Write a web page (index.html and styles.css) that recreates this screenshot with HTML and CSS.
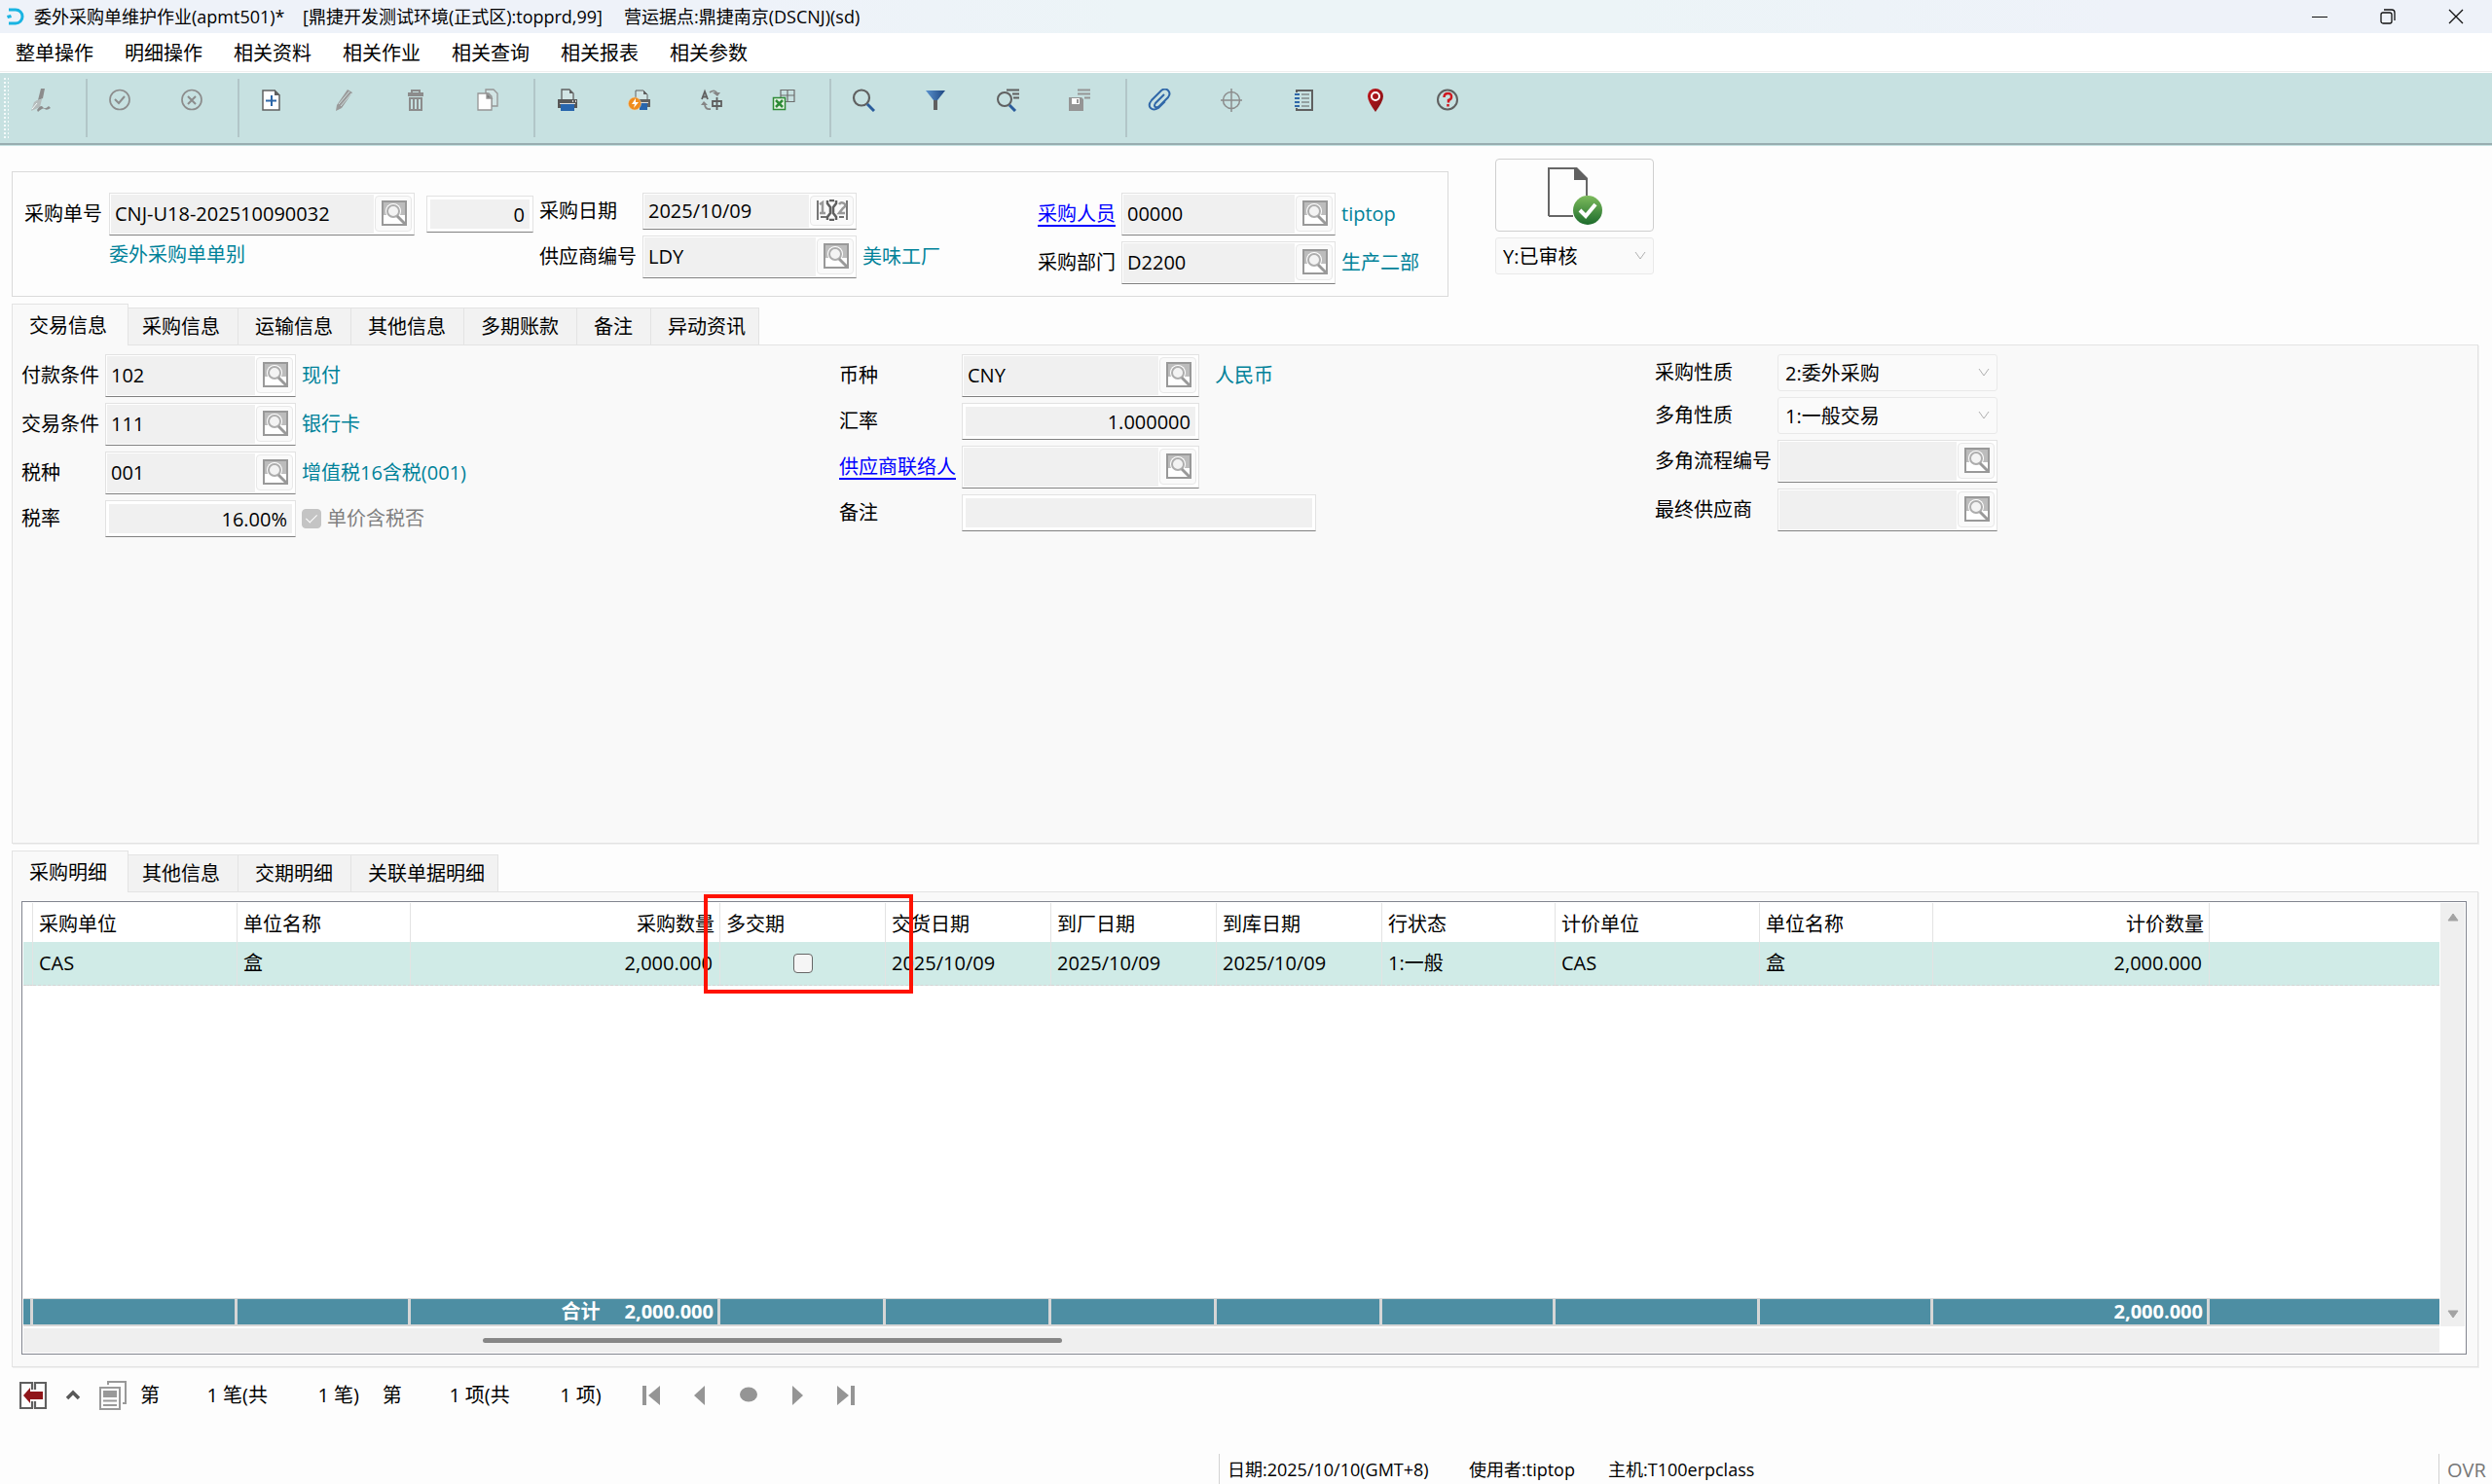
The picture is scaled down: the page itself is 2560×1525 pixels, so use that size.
FILE: index.html
```html
<!DOCTYPE html>
<html lang="zh-CN">
<head>
<meta charset="utf-8">
<title>委外采购单维护作业(apmt501)</title>
<link rel="stylesheet" href="styles.css">
</head>
<body>
<svg width="0" height="0" hidden>
  <defs>
    <linearGradient id="blue" x1="0" y1="0" x2="1" y2="0"><stop offset="0" stop-color="#5b93cf"/><stop offset="1" stop-color="#1d4580"/></linearGradient>
    <linearGradient id="green" x1="0" y1="0" x2="0" y2="1"><stop offset="0" stop-color="#7dbb5c"/><stop offset="1" stop-color="#1c6b2c"/></linearGradient>
    <linearGradient id="red" x1="0" y1="0" x2="1" y2="1"><stop offset="0" stop-color="#c4161c"/><stop offset="1" stop-color="#7a1216"/></linearGradient>
  </defs>
  <symbol id="lookup" viewBox="0 0 26 26">
    <rect x="1" y="1" width="24" height="24" fill="#fff" stroke="#999" stroke-width="2"/>
    <path d="M2 2h22v13H2z" fill="#bcbcbc"/>
    <circle cx="12" cy="11" r="8" fill="#fff"/>
    <circle cx="12" cy="11" r="6" fill="#f3f3f3" stroke="#adadad" stroke-width="2"/>
    <path d="M16 16l8 8" stroke="#999" stroke-width="3"/>
  </symbol>
  <symbol id="chevron" viewBox="0 0 12 10"><path d="M1 1l5 7 5-7" fill="none" stroke="#b0b0b0"/></symbol>
</svg>

<header class="titlebar">
  <svg class="logo" viewBox="0 0 18 18"><path d="M2 2h7a7 7 0 0 1 0 14H2" fill="none" stroke="#19b4e2" stroke-width="3"/><path d="M0 8l4-1 1 3-4 1z" fill="#19b4e2"/></svg>
  <h1 class="title"><span>委外采购单维护作业(apmt501)*</span><span>[鼎捷开发测试环境(正式区):topprd,99]</span><span>营运据点:鼎捷南京(DSCNJ)(sd)</span></h1>
  <div class="window-controls">
    <button type="button" aria-label="最小化"><svg viewBox="0 0 16 16"><path d="M0 8.500h16" stroke="#111"/></svg></button>
    <button type="button" aria-label="还原"><svg viewBox="0 0 16 16" fill="none" stroke="#111" stroke-width="1.300"><rect x="1" y="4" width="11" height="11" rx="2"/><path d="M4 1h8q3 0 3 3v8"/></svg></button>
    <button type="button" aria-label="关闭"><svg viewBox="0 0 16 16"><path d="M1 1l14 14M15 1L1 15" stroke="#111" stroke-width="1.300"/></svg></button>
  </div>
</header>

<nav class="menu">
  <button type="button">整单操作</button><button type="button">明细操作</button><button type="button">相关资料</button><button type="button">相关作业</button><button type="button">相关查询</button><button type="button">相关报表</button><button type="button">相关参数</button>
</nav>

<div class="toolbar" role="toolbar">
  <div class="tools">
    <button type="button" aria-label="签核"><svg viewBox="0 0 24 24" fill="#8c8c8c"><path d="M13 0h4l-2 10-5 2z"/><path d="M9 12l5-1-2 8-9 4 3-9z" fill="#b5bcbc"/><path d="M9 22q4-6 6-3t6-1l2 2q-4 3-6 1t-7 3z"/><path d="M4 21l5-6" stroke="#f4fafa"/></svg></button>
  </div>
  <div class="tools">
    <button type="button" aria-label="确定"><svg viewBox="0 0 24 24" fill="none" stroke="#8c8c8c" stroke-width="1.700"><circle cx="12" cy="11.500" r="10"/><path d="M7 11l4 4 6-7" stroke-width="2"/></svg></button>
    <button type="button" aria-label="取消"><svg viewBox="0 0 24 24" fill="none" stroke="#8c8c8c" stroke-width="1.700"><circle cx="12" cy="11.500" r="10"/><path d="M8 8l8 8M16 8l-8 8" stroke-width="2"/></svg></button>
  </div>
  <div class="tools">
    <button type="button" aria-label="新增"><svg viewBox="0 0 24 24"><path d="M3 2h12l5 5v15H3z" fill="#fff" stroke="#606060" stroke-width="1.500"/><path d="M15 1v6h6z" fill="#606060"/><path d="M12 7v11M6 12.500h11" stroke="#2c66a8" stroke-width="2"/></svg></button>
    <button type="button" aria-label="修改"><svg viewBox="0 0 24 24"><path d="M16 1l5 3-11 16-6 3 1-6z" fill="#9a9a9a"/><path d="M7 16L18 3M9 18L20 5" stroke="#cfe0e0"/></svg></button>
    <button type="button" aria-label="删除"><svg viewBox="0 0 24 24" fill="none" stroke="#8c8c8c"><path d="M8 4V2h8v2" stroke-width="2"/><path d="M4 6h16" stroke-width="4"/><path d="M6 10h12v12H6z" stroke-width="2"/><path d="M10 11v10M14 11v10" stroke-width="2"/></svg></button>
    <button type="button" aria-label="复制"><svg viewBox="0 0 24 24" fill="#fff" stroke="#959595" stroke-width="1.300"><path d="M10 1h8l4 4v13h-6V8l-3-3h-3z" fill="#d2e5e5"/><path d="M2 5h9l5 5v12H2z"/><path d="M11 5v5h5z" fill="#777"/></svg></button>
  </div>
  <div class="tools">
    <button type="button" aria-label="打印"><svg viewBox="0 0 24 24"><path d="M6 11V1h8l4 4v6" fill="#d2e5e5" stroke="#606060" stroke-width="1.300"/><path d="M14 1v4h4z" fill="#606060"/><path d="M2 11h20v9H2z" fill="#575757"/><path d="M17 13h1M20 13h1" stroke="#fff" stroke-width="1.500"/><path d="M5 16h14v7H5z" fill="#2865ad"/><path d="M4 15.500h16" stroke="#ddd"/></svg></button>
    <button type="button" aria-label="快速打印"><svg viewBox="0 0 24 24"><path d="M8 10V2h8l4 4v5" fill="#d2e5e5" stroke="#606060"/><path d="M16 2v4h4z" fill="#606060"/><path d="M8 11h15v8H8z" fill="#606060"/><path d="M12 15h8v7h-8z" fill="#2865ad"/><path d="M12 14.500h9" stroke="#ddd"/><circle cx="7" cy="15.500" r="6.500" fill="#ef8c1e" stroke="#f7d0a0" stroke-width="0.500"/><path d="M8 10l-4 6h3l-1 4 5-6H8z" fill="#fff"/></svg></button>
    <button type="button" aria-label="语言切换"><svg viewBox="0 0 24 24" fill="none" stroke="#606060" stroke-width="1.800"><path d="M2 11L5 3l3 8M3 8.500h4M13 13h9v5h-9zM17.500 9v13"/><path d="M10 4q6-4 8 2" stroke="#858585"/><path d="M13 4h8l-3 4zM1 17l3-4 4 4z" fill="#858585" stroke="none"/><path d="M11 21q-5 1-6-4" stroke="#858585"/></svg></button>
    <button type="button" aria-label="导出表格"><svg viewBox="0 0 24 24" fill="none"><path d="M9 1.500h14v12H9zM16 1v12M9 7h14" stroke="#6d6d6d" stroke-width="1.200"/><rect x="1.500" y="9.500" width="12" height="12" fill="#e9f4e8" stroke="#2e8b37" stroke-width="1.500"/><path d="M4 12l7 7M11 12l-7 7" stroke="#2e8b37" stroke-width="2.500"/></svg></button>
  </div>
  <div class="tools">
    <button type="button" aria-label="查询"><svg viewBox="0 0 24 24" fill="none"><circle cx="10" cy="9.500" r="8" stroke="#606060" stroke-width="2.200"/><path d="M16 16l7 7" stroke="#2a5c9c" stroke-width="3"/></svg></button>
    <button type="button" aria-label="筛选"><svg viewBox="0 0 24 24"><path d="M2 2h20l-8 10h-4z" fill="url(#blue)"/><path d="M10 12h4v10h-4z" fill="#606060"/></svg></button>
    <button type="button" aria-label="查询条件"><svg viewBox="0 0 24 24" fill="none"><circle cx="9" cy="11" r="7" stroke="#606060" stroke-width="2"/><path d="M14 17l6 6" stroke="#2a5c9c" stroke-width="3"/><path d="M11 1.500h13M17 5.500h7M18 9.500h6" stroke="#606060" stroke-width="2"/></svg></button>
    <button type="button" aria-label="保存条件"><svg viewBox="0 0 24 24"><path d="M10 1.500h13M10 5.500h13M17 9.500h6" stroke="#959595" stroke-width="2"/><path d="M1 9h13l2 2v12H1z" fill="#959595"/><path d="M4 10h8v6H4z" fill="#fff"/><path d="M9 11h2v4H9z" fill="#959595"/></svg></button>
  </div>
  <div class="tools">
    <button type="button" aria-label="附件"><svg viewBox="0 0 24 24" fill="none" stroke="#2f67a8" stroke-width="2"><path d="M17 6l-9 9q-2 3 0 4t4-1l9-9q3-4 0-7t-7 0L4 12q-4 5-1 8t8 0l7-7"/></svg></button>
    <button type="button" aria-label="定位"><svg viewBox="0 0 24 24" fill="none" stroke="#8c8c8c" stroke-width="1.500"><circle cx="12" cy="12" r="8.500"/><path d="M12 0v24M1 12h22"/></svg></button>
    <button type="button" aria-label="记录"><svg viewBox="0 0 24 24" fill="none"><path d="M5 4V2h16v20H5v-2" stroke="#606060" stroke-width="2"/><path d="M10 6h8M10 10h8M10 14h8M10 18h8" stroke="#606060"/><path d="M3 6h5M3 10h5M3 14h5M3 18h5" stroke="#2f67a8" stroke-width="2"/></svg></button>
    <button type="button" aria-label="标记"><svg viewBox="0 0 24 24"><path d="M12 24Q4 13 4 8a8 8 0 0 1 16 0q0 5-8 16z" fill="url(#red)"/><circle cx="12" cy="8" r="4" fill="none" stroke="#fff" stroke-width="2"/></svg></button>
    <button type="button" aria-label="帮助"><svg viewBox="0 0 24 24" fill="none"><circle cx="12" cy="11.500" r="10" stroke="#606060" stroke-width="2"/><path d="M8.500 9q0-4 4-4t3.500 4q0 2-3 3v2.500M12.500 16v2.500" stroke="#cf1820" stroke-width="2.500"/></svg></button>
  </div>
</div>

<main class="content">
  <div class="summary">
    <section class="document">
      <div class="fields fields-order">
        <div class="row"><label for="no">采购单号</label><span class="lookup wide"><input id="no" value="CNJ-U18-202510090032" readonly><button type="button" aria-label="查找采购单号"><svg><use href="#lookup"/></svg></button></span><input class="plain version" aria-label="版次" value="0" readonly></div>
        <output class="note under" for="no">委外采购单单别</output>
      </div>
      <div class="fields fields-vendor">
        <div class="row"><label for="date">采购日期</label><span class="lookup date"><input id="date" value="2025/10/09" readonly><button type="button" aria-label="选择日期"><svg class="calendar" viewBox="0 0 34 22" fill="none"><path d="M2 1v20M32 1v20" stroke="#777" stroke-width="2"/><path d="M4 5l3-2v10M4 14h6M24 5q2-3 5-1t-1 5l-4 5h6" stroke="#999" stroke-width="2.500"/><path d="M12 1v3l3 4v6l-3 4v3M21 1v3l-3 4v6l3 4v3M14 1h5M14 21h5" stroke="#606060" stroke-width="2.500"/><path d="M5 18h6M24 18h5" stroke="#707070" stroke-width="2"/></svg></button></span></div>
        <div class="row"><label for="vendor">供应商编号</label><span class="lookup"><input id="vendor" value="LDY" readonly><button type="button" aria-label="查找供应商"><svg><use href="#lookup"/></svg></button></span><output class="note" for="vendor">美味工厂</output></div>
      </div>
      <div class="fields fields-staff">
        <div class="row"><label for="staff"><a href="#staff">采购人员</a></label><span class="lookup"><input id="staff" value="00000" readonly><button type="button" aria-label="查找人员"><svg><use href="#lookup"/></svg></button></span><output class="note" for="staff">tiptop</output></div>
        <div class="row"><label for="dept">采购部门</label><span class="lookup"><input id="dept" value="D2200" readonly><button type="button" aria-label="查找部门"><svg><use href="#lookup"/></svg></button></span><output class="note" for="dept">生产二部</output></div>
      </div>
    </section>
    <div class="approval">
      <button type="button" class="approved" aria-label="审核状态"><svg viewBox="0 0 58 60"><path d="M2 51V2h27l12 12v16M2 51h25" fill="none" stroke="#666" stroke-width="2"/><path d="M28 1v13h14v-2L31 1z" fill="#606060"/><circle cx="42" cy="45" r="15" fill="url(#green)"/><path d="M34 45l6 6 10-12" fill="none" stroke="#fff" stroke-width="4"/></svg></button>
      <span class="choice"><select aria-label="状态"><option>Y:已审核</option></select><svg><use href="#chevron"/></svg></span>
    </div>
  </div>

  <section class="tabbed trade">
    <div class="tabs" role="tablist">
      <button type="button" role="tab" aria-selected="true">交易信息</button><button type="button" role="tab">采购信息</button><button type="button" role="tab">运输信息</button><button type="button" role="tab">其他信息</button><button type="button" role="tab">多期账款</button><button type="button" role="tab">备注</button><button type="button" role="tab">异动资讯</button>
    </div>
    <div class="panel trade-panel" role="tabpanel">
      <div class="fields fields-terms">
        <div class="row"><label for="pay">付款条件</label><span class="lookup"><input id="pay" value="102" readonly><button type="button" aria-label="查找付款条件"><svg><use href="#lookup"/></svg></button></span><output class="note" for="pay">现付</output></div>
        <div class="row"><label for="term">交易条件</label><span class="lookup"><input id="term" value="111" readonly><button type="button" aria-label="查找交易条件"><svg><use href="#lookup"/></svg></button></span><output class="note" for="term">银行卡</output></div>
        <div class="row"><label for="tax">税种</label><span class="lookup"><input id="tax" value="001" readonly><button type="button" aria-label="查找税种"><svg><use href="#lookup"/></svg></button></span><output class="note" for="tax">增值税16含税(001)</output></div>
        <div class="row"><label for="rate">税率</label><input class="plain" id="rate" value="16.00%" readonly><input type="checkbox" class="tick" id="incl" checked disabled><label class="tick-label" for="incl">单价含税否</label></div>
      </div>
      <div class="fields fields-currency">
        <div class="row"><label for="cur">币种</label><span class="lookup"><input id="cur" value="CNY" readonly><button type="button" aria-label="查找币种"><svg><use href="#lookup"/></svg></button></span><output class="note" for="cur">人民币</output></div>
        <div class="row"><label for="ex">汇率</label><input class="plain" id="ex" value="1.000000" readonly></div>
        <div class="row"><label for="contact"><a href="#contact">供应商联络人</a></label><span class="lookup"><input id="contact" readonly><button type="button" aria-label="查找联络人"><svg><use href="#lookup"/></svg></button></span></div>
        <div class="row"><label for="memo">备注</label><input class="plain memo" id="memo" readonly></div>
      </div>
      <div class="fields fields-kind">
        <div class="row"><label for="kind">采购性质</label><span class="choice"><select id="kind"><option>2:委外采购</option></select><svg><use href="#chevron"/></svg></span></div>
        <div class="row"><label for="multi">多角性质</label><span class="choice"><select id="multi"><option>1:一般交易</option></select><svg><use href="#chevron"/></svg></span></div>
        <div class="row"><label for="flow">多角流程编号</label><span class="lookup"><input id="flow" readonly><button type="button" aria-label="查找流程"><svg><use href="#lookup"/></svg></button></span></div>
        <div class="row"><label for="final">最终供应商</label><span class="lookup"><input id="final" readonly><button type="button" aria-label="查找最终供应商"><svg><use href="#lookup"/></svg></button></span></div>
      </div>
    </div>
  </section>

  <section class="tabbed detail">
    <div class="tabs" role="tablist">
      <button type="button" role="tab" aria-selected="true">采购明细</button><button type="button" role="tab">其他信息</button><button type="button" role="tab">交期明细</button><button type="button" role="tab">关联单据明细</button>
    </div>
    <div class="panel detail-panel" role="tabpanel">
      <div class="grid">
        <table>
          <colgroup><col class="c-edge"><col class="c-unit"><col class="c-name"><col class="c-qty"><col class="c-date"><col class="c-date"><col class="c-date"><col class="c-date"><col class="c-name"><col class="c-unit"><col class="c-name"><col class="c-price"><col></colgroup>
          <thead><tr><th></th><th>采购单位</th><th>单位名称</th><th class="num">采购数量</th><th>多交期</th><th>交货日期</th><th>到厂日期</th><th>到库日期</th><th>行状态</th><th>计价单位</th><th>单位名称</th><th class="num">计价数量</th><th></th></tr></thead>
          <tbody>
            <tr class="current"><td></td><td>CAS</td><td>盒</td><td class="num">2,000.000</td><td class="check"><input type="checkbox" class="tick" aria-label="多交期"></td><td>2025/10/09</td><td>2025/10/09</td><td>2025/10/09</td><td>1:一般</td><td>CAS</td><td>盒</td><td class="num">2,000.000</td><td></td></tr>
            <tr class="blank"><td colspan="13"></td></tr>
          </tbody>
          <tfoot><tr><td></td><td></td><td></td><td class="num"><span class="total">合计</span>2,000.000</td><td></td><td></td><td></td><td></td><td></td><td></td><td></td><td class="num">2,000.000</td><td></td></tr></tfoot>
        </table>
        <div class="vscroll"><svg viewBox="0 0 12 9"><path d="M6 1l5 7H1z" fill="#a3a3a3" stroke="#a3a3a3" stroke-linejoin="round"/></svg><svg viewBox="0 0 12 9"><path d="M6 8L1 1h10z" fill="#a3a3a3" stroke="#a3a3a3" stroke-linejoin="round"/></svg></div>
        <div class="hscroll"><span class="thumb"></span></div>
        <div class="highlight"></div>
      </div>
    </div>
  </section>
</main>

<nav class="pager">
  <button type="button" class="exit" aria-label="离开"><svg viewBox="0 0 28 28"><path d="M13 8V1H1v26h12v-7M16 8V1h11v26H16v-7" fill="none" stroke="#5f5f5f" stroke-width="2.200"/><path d="M4 14l7-8v4h13v8H11v4z" fill="#8f1519"/></svg></button>
  <button type="button" class="collapse" aria-label="收合"><svg viewBox="0 0 16 12"><path d="M2 9l6-6 6 6" fill="none" stroke="#585858" stroke-width="3.500"/></svg></button>
  <button type="button" class="pages" aria-label="列表"><svg viewBox="0 0 28 30" fill="none" stroke="#999" stroke-width="2"><path d="M9 4V1h18v22h-3M1 7h20v22H1z"/><path d="M4 10h14v7H4z" fill="#999" stroke="none"/><path d="M4 20.500h14M4 25h14"/></svg></button>
  <p class="count"><span>第</span><span class="n">1</span><span>笔(共</span><span class="n all">1</span><span>笔)</span></p>
  <p class="count"><span>第</span><span class="n">1</span><span>项(共</span><span class="n all">1</span><span>项)</span></p>
  <div class="steps">
    <button type="button" aria-label="首笔"><svg viewBox="0 0 20 22" fill="#959595"><path d="M1 1h4v20H1zM19 1v20L7 11z"/></svg></button>
    <button type="button" aria-label="上一笔"><svg viewBox="0 0 20 22" fill="#959595"><path d="M15 1v20L4 11z"/></svg></button>
    <button type="button" aria-label="跳转"><svg viewBox="0 0 20 22" fill="#959595"><ellipse cx="10" cy="10" rx="9" ry="7.500"/></svg></button>
    <button type="button" aria-label="下一笔"><svg viewBox="0 0 20 22" fill="#959595"><path d="M5 1v20l11-10z"/></svg></button>
    <button type="button" aria-label="末笔"><svg viewBox="0 0 20 22" fill="#959595"><path d="M15 1h4v20h-4zM1 1v20l12-10z"/></svg></button>
  </div>
</nav>

<footer class="status">
  <p class="session"><span>日期:2025/10/10(GMT+8)</span><span>使用者:tiptop</span><span>主机:T100erpclass</span></p>
  <span class="mode">OVR</span>
</footer>
</body>
</html>
```
FILE: styles.css
```css
* { box-sizing: border-box; }

body {
  margin: 0;
  height: 100vh;
  min-height: 1100px;
  display: flex;
  flex-direction: column;
  background: #fdfdfd;
  color: #000;
  font: 20px/28px "Open Sans", "Noto Sans CJK SC", sans-serif;
}

button, input, select { font: inherit; color: inherit; margin: 0; padding: 0; border: 0; background: none; border-radius: 0; }
h1, p { margin: 0; font-weight: 400; }
svg { display: block; }

/* Title bar */
.titlebar { display: flex; align-items: center; height: 34px; padding: 0 2px 0 7px; background: linear-gradient(90deg, #eef2f9 30%, #ecf4f7 45%, #ecf4f7 65%, #eef2f9 85%); }
.logo { width: 18px; height: 18px; margin-right: 10px; }
.title { flex: 1; display: grid; grid-template-columns: 276px 330px auto; justify-content: start; font-size: 18px; line-height: 34px; white-space: nowrap; }
.window-controls { display: flex; }
.window-controls button { width: 70px; height: 34px; display: grid; place-items: center; }
.window-controls svg { width: 16px; height: 16px; }

/* Menu */
.menu { display: flex; gap: 32px; height: 40px; padding: 2px 0 0 16px; background: #fff; border-bottom: 1px solid #efefef; }

/* Toolbar */
.toolbar { position: relative; display: flex; height: 75px; margin-bottom: 1px; padding: 6px 0 0 8px; background: #c7e1e1; border-top: 1px solid #fff; border-bottom: 2px solid #98adb0; box-shadow: 0 1px #c7e1e1; }
.toolbar::before { content: ""; position: absolute; left: 3px; top: 4px; bottom: 4px; width: 6px; background: radial-gradient(circle, #f4fafa 1px, transparent 1px) 0 0 / 4px 4px; }
.tools { display: flex; gap: 8px; height: 60px; padding-right: 14px; border-right: 2px solid #b2c6c8; }
.tools:last-child { border-right: 0; }
.tools button { width: 66px; height: 44px; display: grid; place-items: center; }
.tools svg { width: 24px; height: 24px; }

/* Form area */
.content { flex: 1; min-height: 0; display: flex; flex-direction: column; gap: 7px; padding: 13px 14px 0 12px; }
.summary { display: flex; gap: 48px; align-items: flex-start; }
.document { flex: 0 1 1476px; display: grid; grid-template-columns: 529px 512px auto; justify-content: start; margin-top: 13px; padding: 21px 0 12px 12px; border: 1px solid #dadada; }
.fields { display: flex; flex-direction: column; gap: 6px; }
.row { display: flex; align-items: center; white-space: nowrap; }
.row label { flex: none; width: var(--label); }
.fields-order { --label: 87px; --field: 314px; }
.fields-vendor { --label: 106px; --field: 220px; }
.fields-staff { --label: 86px; --field: 220px; }
.fields-terms { --label: 86px; --field: 196px; }
.fields-currency { --label: 126px; --field: 244px; }
.fields-kind { --label: 126px; --field: 226px; }
a { color: #00f; text-decoration: underline; text-underline-offset: 4px; }
.note { margin-left: 6px; color: #008299; }
.fields-currency .note { margin-left: 16px; }
.under { margin-left: 87px; }

.lookup { display: flex; width: var(--field); height: 44px; padding: 1px 2px 1px 1px; background: #fff; border: 1px solid #e2e2e2; border-bottom-color: #808080; }
.lookup input { flex: 1; min-width: 0; padding: 0 0 1px 4px; background: #f0f0f0; }
.lookup button { flex: none; width: 38px; margin: 1px 0 2px 1px; padding: 0 0 2px 2px; display: grid; place-items: center; background: #fafafa; border: 1px solid #e8e8e8; border-radius: 4px; }
.lookup button svg { width: 26px; height: 26px; }
.lookup.date { height: 38px; }
.lookup.date input { padding-bottom: 0; }
.lookup.date button { width: 45px; padding: 0 0 1px; }
.lookup .calendar { width: 34px; height: 22px; }
.plain { width: var(--field); height: 38px; padding: 3px 8px 2px; text-align: right; background: #f0f0f0; border: 1px solid #e2e2e2; border-bottom-color: #808080; box-shadow: inset 0 0 0 3px #fff; }
.version { width: 110px; margin-left: 12px; }
.memo { width: 364px; text-align: left; }

.tick { appearance: none; flex: none; width: 20px; height: 20px; background: #f5f5f5; border: 1px solid #666; border-radius: 4px; }
.tick:disabled { margin: 0 6px; background: #c4c4c4; border-color: #c4c4c4; display: grid; place-items: center; }
.tick:disabled::before { content: ""; width: 5px; height: 10px; margin-bottom: 3px; border: solid #fff; border-width: 0 1px 1px 0; transform: rotate(45deg); }
.row .tick-label { width: auto; color: #808080; }

.choice { display: grid; align-items: center; width: var(--field); height: 38px; }
.choice > * { grid-area: 1 / 1; }
.choice select { appearance: none; width: 100%; height: 38px; padding: 2px 0 0 7px; background: #fafafa; border: 1px solid #e9e9e9; border-radius: 3px; }
.choice svg { justify-self: end; width: 12px; height: 10px; margin-right: 8px; pointer-events: none; }
.approval { display: grid; gap: 6px; width: 163px; --field: 163px; }
.approved { height: 75px; display: grid; place-items: center; background: #fdfdfd; border: 1px solid #cfcfcf; border-radius: 4px; }
.approved svg { width: 58px; height: 60px; }

/* Tabs */
.tabbed { display: flex; flex-direction: column; min-height: 0; }
.trade { flex: 555 1 0; }
.detail { flex: 531 1 0; }
.tabs { flex: none; display: flex; align-items: flex-end; height: 42px; }
.tabs button { height: 38px; padding: 1px 18px 0 17px; background: #f2f2f2; border: 1px solid #e3e3e3; border-width: 1px 1px 0 0; }
.tabs button:last-child { padding-right: 13px; }
.tabs [aria-selected] { position: relative; height: 43px; margin: 0 -3px -1px 0; padding: 1px 21px 0 17px; background: #f9f9f9; border-left-width: 1px; }
.panel { flex: 1; min-height: 0; background: #f9f9f9; border: 1px solid #e3e3e3; box-shadow: 1px 1px #f0f0f0; }
.trade-panel { display: grid; grid-template-columns: 840fr 838fr 845fr; align-items: start; padding: 9px 0 0 9px; }

/* Detail grid */
.detail-panel { display: grid; padding: 9px 11px 12px 9px; }
.grid { position: relative; display: grid; grid-template: minmax(0, 1fr) 25px / minmax(0, 1fr) 25px; gap: 2px 1px; padding: 1px; background: #fff; border: 1px solid #82858f; }
table { width: 100%; height: 100%; table-layout: fixed; border-collapse: separate; border-spacing: 0; white-space: nowrap; }
.c-edge { width: 10px; }
.c-unit { width: 210px; }
.c-name { width: 178px; }
.c-qty { width: 318px; }
.c-date { width: 170px; }
.c-price { width: 284px; }
th, td { padding: 0 5px 0 6px; text-align: left; font-weight: 400; border-right: 1px solid #e3e3e3; overflow: hidden; }
th { height: 40px; padding-top: 3px; }
th:last-child, td:last-child { border-right: 0; }
.num { text-align: right; }
td.num { padding-right: 7px; }
.current td { height: 45px; background: #d0ebe7; border-bottom: 1px dashed #d4d4d4; }
.current .check { text-align: center; }
.check .tick { display: block; margin: 0 auto; }
.blank td { border: 0; }
tfoot td { height: 29px; background: #4d8ea3; color: #fff; font-weight: 700; line-height: 24px; border: solid #d6d6d6; border-width: 1px 3px 2px 0; }
tfoot td.num { padding-right: 4px; }
.total { margin-right: 25px; }
.vscroll { display: flex; flex-direction: column; justify-content: space-between; align-items: center; padding: 10px 0 8px; background: #efefef; }
.vscroll svg { width: 12px; height: 9px; }
.hscroll { display: flex; align-items: center; background: #efefef; }
.thumb { width: 24%; height: 5px; margin-left: 19%; border-radius: 3px; background: #868686; }
.highlight { position: absolute; left: 700px; top: -8px; width: 215px; height: 102px; border: 4px solid #ff1200; pointer-events: none; }

/* Record pager */
.pager { flex: none; display: flex; align-items: center; height: 58px; padding-left: 20px; }
.exit svg { width: 28px; height: 28px; }
.collapse { margin: 0 19px; }
.collapse svg { width: 16px; height: 12px; }
.pages svg { width: 28px; height: 30px; }
.count { display: flex; margin-left: 14px; }
.count + .count { margin-left: 24px; }
.n { width: 60px; margin-right: 5px; text-align: right; }
.n.all { width: 63px; }
.steps { display: flex; gap: 30px; margin-left: 41px; }
.steps svg { width: 20px; height: 22px; }

/* Status bar */
.status { flex: none; display: flex; justify-content: space-between; height: 31px; margin: 31px 0 0 1252px; line-height: 33px; }
.session { display: grid; grid-template-columns: 248px 143px auto; padding-left: 8px; border-left: 1px solid #d2d2d2; font-size: 18px; white-space: nowrap; }
.mode { width: 55px; padding-left: 8px; color: #777; border-left: 1px solid #d2d2d2; }
```
